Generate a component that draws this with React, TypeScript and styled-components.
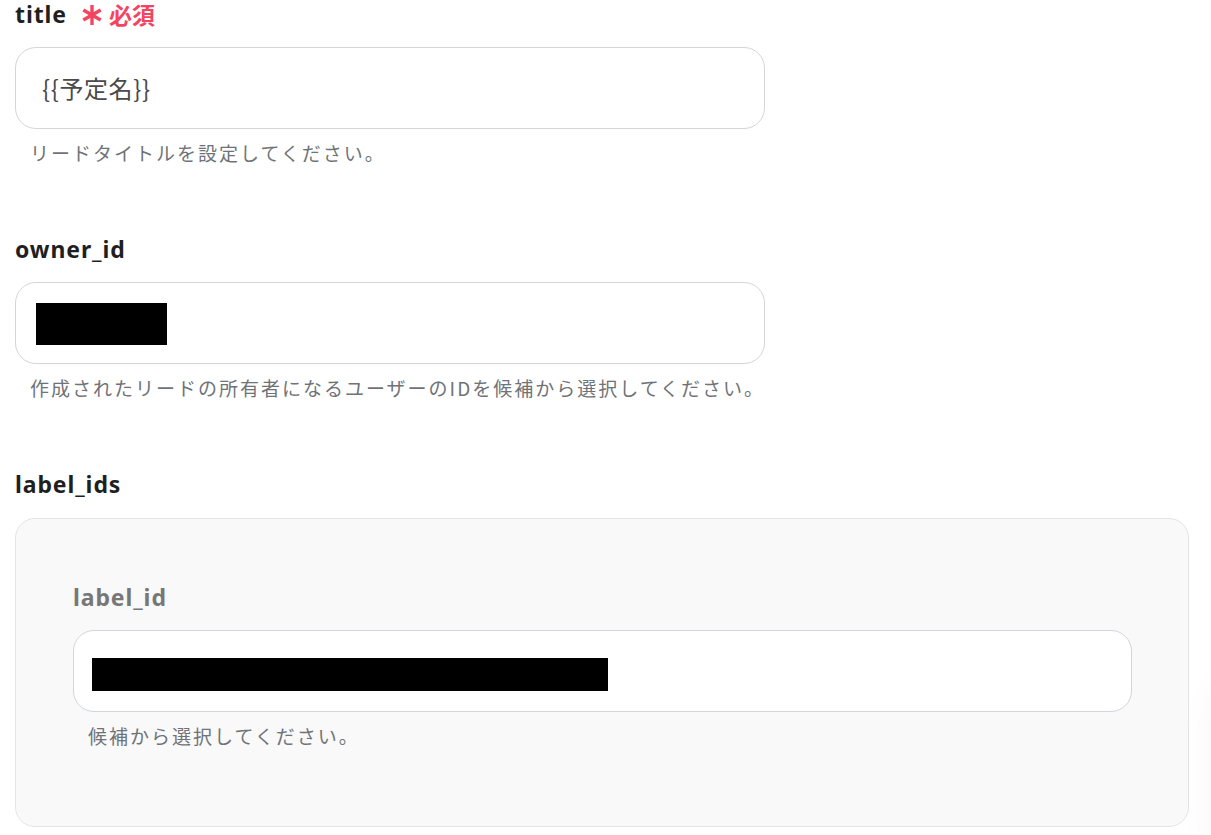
import styled, { createGlobalStyle } from "styled-components";

const GlobalStyle = createGlobalStyle`
  html, body {
    margin: 0;
    padding: 0;
    background: #ffffff;
  }
  body {
    font-family: "Noto Sans", "Noto Sans CJK JP", sans-serif;
    overflow: hidden;
  }
`;

function Asterisk() {
  return (
    <svg width="22" height="22" viewBox="0 0 22 22">
      <g stroke="#f4445f" strokeWidth="3.4" strokeLinecap="butt">
        <line x1="11" y1="1" x2="11" y2="21" />
        <line x1="2.3" y1="6" x2="19.7" y2="16" />
        <line x1="2.3" y1="16" x2="19.7" y2="6" />
      </g>
    </svg>
  );
}

function App() {
  return (
    <>
      <GlobalStyle />
      <Page>
        <Field>
          <Label>
            title
            <Required>
              <Asterisk />
              必須
            </Required>
          </Label>
          <Input>
            <Value>{"{{予定名}}"}</Value>
          </Input>
          <Help>リードタイトルを設定してください。</Help>
        </Field>

        <Field>
          <Label>owner_id</Label>
          <Input>
            <Redact w={131} h={42} top={20} left={20} />
          </Input>
          <Help>作成されたリードの所有者になるユーザーのIDを候補から選択してください。</Help>
        </Field>

        <Field>
          <Label>label_ids</Label>
          <Panel>
            <Label muted>label_id</Label>
            <Input wide>
              <Redact w={516} h={33} top={27} left={18} />
            </Input>
            <Help>候補から選択してください。</Help>
          </Panel>
        </Field>
      </Page>
      <CornerShade />
    </>
  );
}

const Page = styled.div`
  padding: 1px 22px 0 15px;
  display: flex;
  flex-direction: column;
  gap: 68px;
`;

const Field = styled.div`
  display: flex;
  flex-direction: column;
`;

const Label = styled.div<{ muted?: boolean }>`
  display: flex;
  align-items: center;
  height: 26px;
  font-size: 23px;
  font-weight: 700;
  letter-spacing: 0.9px;
  color: ${(p) => (p.muted ? "#777777" : "#1f1f1f")};
  margin-bottom: 20px;
`;

const Required = styled.span`
  display: inline-flex;
  align-items: center;
  gap: 6px;
  margin-left: 14px;
  padding-top: 1px;
  font-size: 23px;
  line-height: 1.1;
  font-weight: 700;
  letter-spacing: 0;
  color: #f4445f;
  font-family: "Noto Sans CJK JP", sans-serif;
`;

const Input = styled.div<{ wide?: boolean }>`
  box-sizing: border-box;
  position: relative;
  width: ${(p) => (p.wide ? "1059px" : "750px")};
  height: 82px;
  border: 1px solid #d2d6dc;
  border-radius: 21px;
  background: #ffffff;
  display: flex;
  align-items: center;
  padding-left: 26px;
  padding-bottom: 2px;
`;

const Value = styled.span`
  font-family: "Noto Sans CJK JP", sans-serif;
  font-size: 24px;
  letter-spacing: 0.6px;
  color: #4a4a4a;
`;

const Redact = styled.span<{ w: number; h: number; top: number; left: number }>`
  position: absolute;
  top: ${(p) => p.top}px;
  left: ${(p) => p.left}px;
  width: ${(p) => p.w}px;
  height: ${(p) => p.h}px;
  background: #000000;
`;

const Help = styled.div`
  margin-top: 9px;
  padding-left: 15px;
  height: 30px;
  line-height: 30px;
  font-family: "Noto Sans CJK JP", sans-serif;
  font-size: 19px;
  letter-spacing: 2px;
  color: #6f7378;
  white-space: nowrap;
`;

const Panel = styled.div`
  box-sizing: border-box;
  width: 1174px;
  height: 309px;
  margin-top: 1px;
  padding: 65px 56px 0 57px;
  background: #f9f9f9;
  border: 1px solid #e4e4e4;
  border-radius: 20px;
  display: flex;
  flex-direction: column;
`;

const CornerShade = styled.div`
  position: fixed;
  right: -95px;
  bottom: -40px;
  width: 80px;
  height: 200px;
  border-radius: 40px;
  box-shadow: 0 0 50px rgba(0, 0, 0, 0.07);
  pointer-events: none;
`;

export default App;
